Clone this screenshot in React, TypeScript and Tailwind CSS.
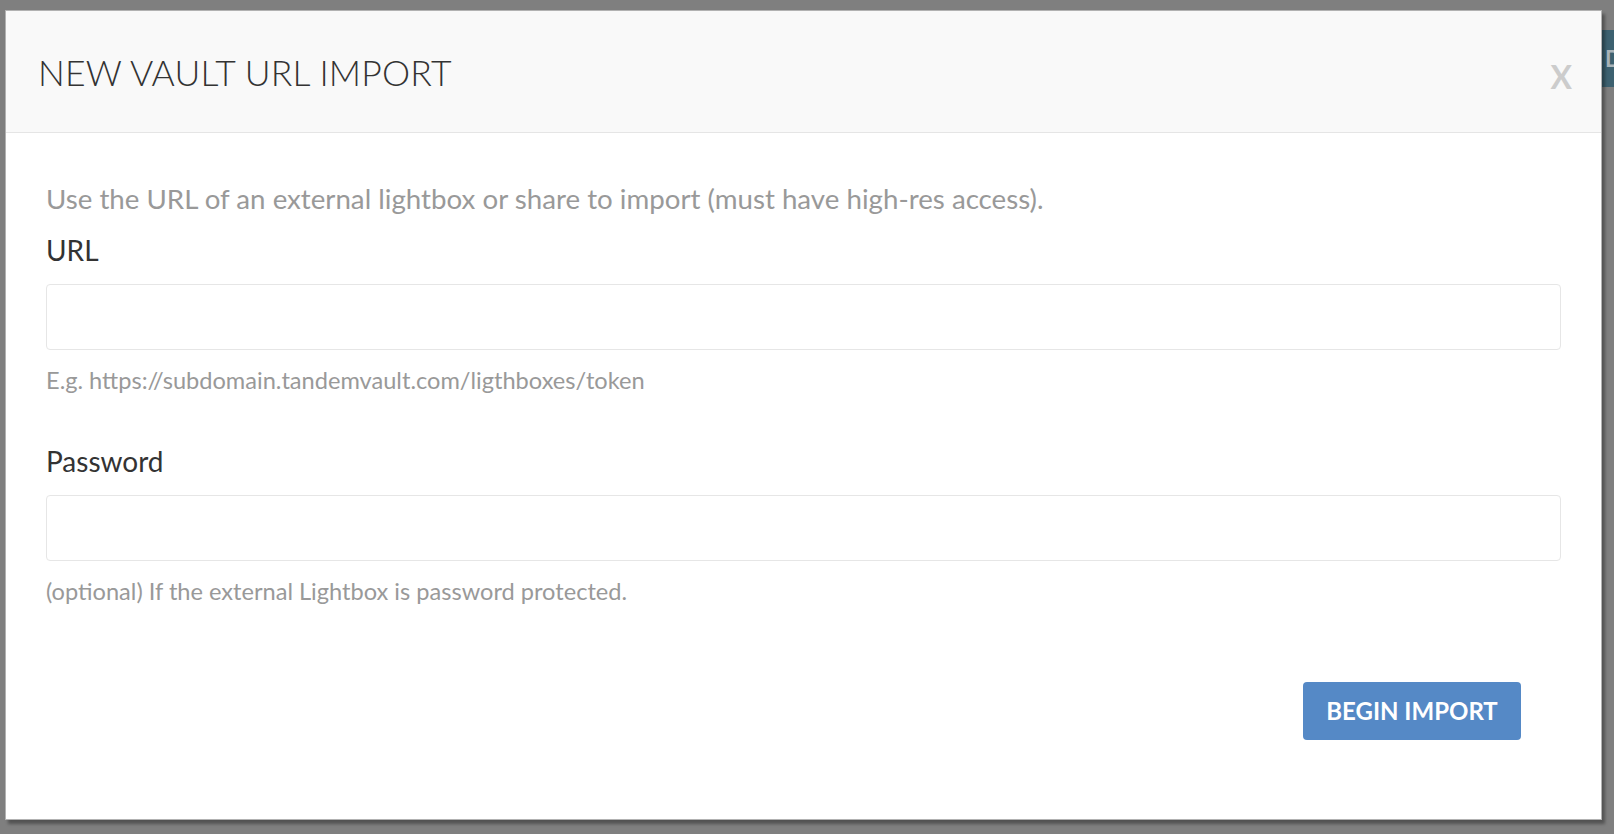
import { useState } from "react";

const lato = "font-['Lato','Liberation_Sans',sans-serif]";

function Field({
  label,
  help,
  type = "text",
}: {
  label: string;
  help: string;
  type?: string;
}) {
  const [value, setValue] = useState("");
  return (
    <div className="flex flex-col">
      <label className="text-[28px] leading-[34px] text-[#333]">{label}</label>
      <input
        type={type}
        value={value}
        onChange={(e) => setValue(e.target.value)}
        className="mt-[17px] h-[66px] w-full rounded-[4px] border border-[#e6e6e6] bg-white px-4 text-[22px] text-[#555] outline-none"
      />
      <p className="mt-[17px] text-[23.6px] leading-[26px] text-[#999]">{help}</p>
    </div>
  );
}

export default function App() {
  return (
    <div className={`relative h-[834px] w-full overflow-hidden bg-[#7f7f7f] ${lato}`}>
      {/* page behind the overlay, peeking out on the right */}
      <div className="absolute left-[1602px] top-[30px] flex h-[57px] w-[40px] items-center bg-[#3d6170] pl-[3px] text-[22px] font-bold text-[#a9b4b9]">
        D
      </div>

      <div className="pl-[5px] pt-[10px]">
        <div className="relative flex h-[810px] w-[1597px] flex-col border border-black/30 bg-white shadow-[3px_4px_3px_rgba(0,0,0,0.35)]">
          {/* header */}
          <div className="flex h-[122px] shrink-0 items-center justify-between border-b border-[#e5e5e5] bg-[#f9f9f9] pl-[32px] pr-[29px]">
            <h2 className="pt-[2px] text-[35.5px] font-light leading-none tracking-[0.2px] text-[#333]">
              NEW VAULT URL IMPORT
            </h2>
            <button className="pt-[10px] text-[32px] font-bold leading-none text-[#cccccc]">
              X
            </button>
          </div>

          {/* body */}
          <div className="flex flex-col px-[40px] pt-[48px]">
            <p className="text-[27.7px] leading-[36px] text-[#999]">
              Use the URL of an external lightbox or share to import (must have high-res access).
            </p>
            <div className="mt-[16px]">
              <Field label="URL" help="E.g. https://subdomain.tandemvault.com/ligthboxes/token" />
            </div>
            <div className="mt-[51px]">
              <Field
                label="Password"
                type="password"
                help="(optional) If the external Lightbox is password protected."
              />
            </div>
          </div>

          {/* footer */}
          <div className="flex justify-end pr-[80px] pt-[78px]">
            <button className="h-[58px] w-[218px] rounded-[4px] bg-[#5589c6] text-[24px] font-bold text-white">
              BEGIN IMPORT
            </button>
          </div>
        </div>
      </div>
    </div>
  );
}
